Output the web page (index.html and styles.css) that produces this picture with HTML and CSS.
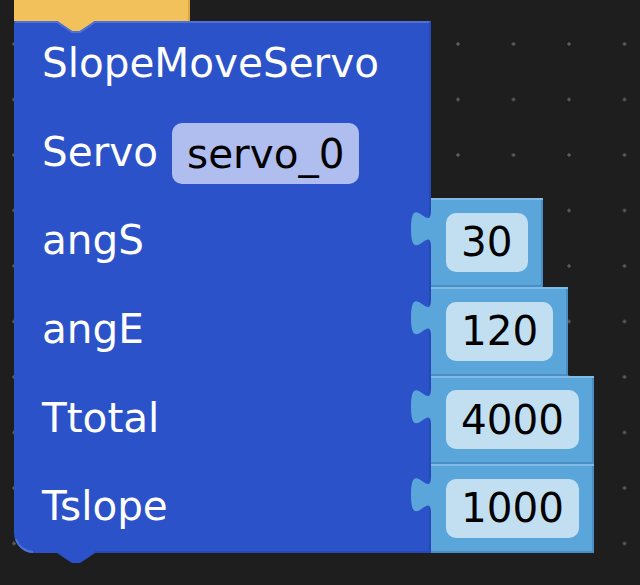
FILE: index.html
```html
<!DOCTYPE html>
<html>
<head>
<meta charset="utf-8">
<link rel="stylesheet" href="styles.css">
</head>
<body>
<div class="workspace">
  <div class="prev-block"></div>
  <div class="block">
    <svg class="block-shape" width="417" height="542" viewBox="0 0 417 542">
      <path class="body" d="M0,0 H43 l15,10 h8 l15,-10 H417 V532 H81 l-15,10 h-8 l-15,-10 H20 a20,20 0 0 1 -20,-20 Z"/>
      <path class="hl" d="M2,518 a19,19 0 0 0 17,13 M1,1 H43 l15,10 h8 l15,-10 H416"/>
      <path class="sh" d="M416,1 V531 H81"/>
    </svg>
    <div class="row"><span class="label">SlopeMoveServo</span></div>
    <div class="row"><span class="label">Servo</span><span class="dropdown">servo_0</span></div>
    <div class="row">
      <span class="label label-input">angS</span>
      <div class="value">
        <svg class="tab" width="22" height="38" viewBox="0 0 22 38"><path d="M22,0 H20 C20,25 0,-20 0,18.75 C0,57.5 20,12.5 20,37.5 H22 Z"/></svg>
        <span class="field">30</span>
      </div>
    </div>
    <div class="row">
      <span class="label label-input">angE</span>
      <div class="value">
        <svg class="tab" width="22" height="38" viewBox="0 0 22 38"><path d="M22,0 H20 C20,25 0,-20 0,18.75 C0,57.5 20,12.5 20,37.5 H22 Z"/></svg>
        <span class="field">120</span>
      </div>
    </div>
    <div class="row">
      <span class="label label-input">Ttotal</span>
      <div class="value">
        <svg class="tab" width="22" height="38" viewBox="0 0 22 38"><path d="M22,0 H20 C20,25 0,-20 0,18.75 C0,57.5 20,12.5 20,37.5 H22 Z"/></svg>
        <span class="field">4000</span>
      </div>
    </div>
    <div class="row">
      <span class="label label-input">Tslope</span>
      <div class="value">
        <svg class="tab" width="22" height="38" viewBox="0 0 22 38"><path d="M22,0 H20 C20,25 0,-20 0,18.75 C0,57.5 20,12.5 20,37.5 H22 Z"/></svg>
        <span class="field">1000</span>
      </div>
    </div>
  </div>
</div>
</body>
</html>
```

FILE: styles.css
```css
html, body {
  margin: 0;
  padding: 0;
}
body {
  width: 640px;
  height: 585px;
  overflow: hidden;
  background-color: #1e1e1e;
  background-image: radial-gradient(circle, #5c5c5c 1.4px, transparent 1.9px);
  background-size: 55.5px 55.5px;
  background-position: -13.75px 16.25px;
  font-family: "DejaVu Sans", sans-serif;
}
.workspace {
  position: relative;
  width: 640px;
  height: 585px;
}
.prev-block {
  position: absolute;
  left: 14px;
  top: -10px;
  width: 176px;
  height: 45px;
  background: #f2c15c;
  box-shadow: inset -2px 0 0 #d9a842;
  z-index: 0;
}
.block {
  position: absolute;
  left: 14px;
  top: 21px;
  width: 417px;
  display: grid;
  grid-template-rows: repeat(6, 88.67px);
  z-index: 1;
}
.block-shape {
  position: absolute;
  left: 0;
  top: 0;
  overflow: visible;
  z-index: -1;
}
.block-shape .body {
  fill: #2b52c9;
}
.block-shape .hl {
  fill: none;
  stroke: #4f71d4;
  stroke-width: 2;
}
.block-shape .sh {
  fill: none;
  stroke: #2749b8;
  stroke-width: 2;
}
.row {
  display: flex;
  align-items: center;
  gap: 14px;
  padding-left: 28px;
  min-width: 0;
}
.label {
  color: #ffffff;
  font-size: 40.5px;
  line-height: 1;
  white-space: nowrap;
  position: relative;
  top: -2px;
}
.label-input {
  flex: 0 0 389px;
}
.row:has(.value) {
  gap: 0;
  align-items: stretch;
}
.row:has(.value) .label {
  display: flex;
  align-items: center;
}
.dropdown {
  display: flex;
  align-items: center;
  height: 61px;
  padding: 0 15px;
  border-radius: 10px;
  background: #afbdef;
  color: #000;
  font-size: 40.5px;
  line-height: 1;
  box-sizing: border-box;
}
.value {
  position: relative;
  display: flex;
  align-items: center;
  padding: 0 15px 0 15px;
  background: #5aa5da;
  box-shadow: inset 0 2px 0 #7fbbe6, inset -2px -2px 0 #4a8fc3;
}
.tab {
  position: absolute;
  left: -20px;
  top: 12px;
  overflow: visible;
}
.tab path {
  fill: #5aa5da;
}
.field {
  display: flex;
  align-items: center;
  height: 59px;
  padding: 0 15px;
  border-radius: 10px;
  background: #c2dff2;
  color: #000;
  font-size: 40.5px;
  line-height: 1;
  box-sizing: border-box;
}
```
